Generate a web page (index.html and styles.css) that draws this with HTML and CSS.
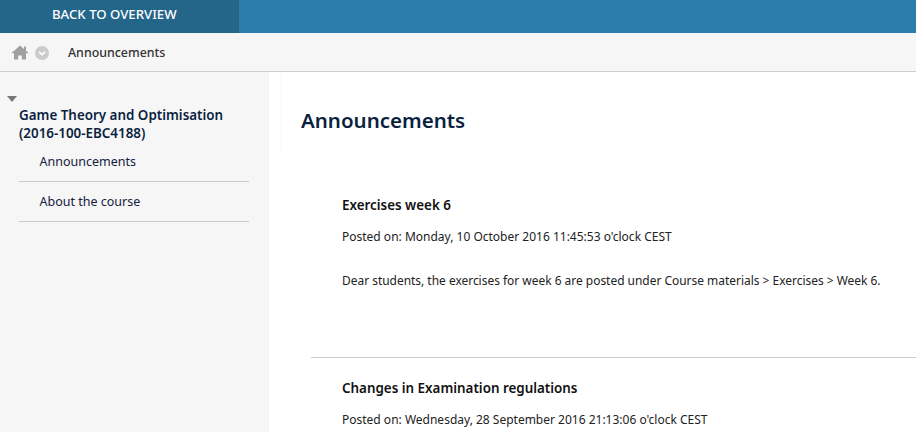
FILE: index.html
```html
<!DOCTYPE html>
<html lang="en">
<head>
  <meta charset="UTF-8">
  <meta name="viewport" content="width=device-width, initial-scale=1.0">
  <title>Announcements</title>
  <link rel="stylesheet" href="styles.css">
</head>
<body>
  <div class="topbar">
    <a class="back-link" href="#">BACK TO OVERVIEW</a>
  </div>

  <div class="breadcrumb">
    <svg class="home-icon" viewBox="0 0 18 15" width="18" height="15" aria-hidden="true">
      <path d="M9 0.5 L13 4 L13 1.5 L15 1.5 L15 5.8 L17.7 8.2 L15 8.2 L15 14.5 L10.8 14.5 L10.8 10.5 L7.2 10.5 L7.2 14.5 L3 14.5 L3 8.2 L0.3 8.2 Z" fill="#a0a0a0"/>
    </svg>
    <svg class="down-icon" viewBox="0 0 14 14" width="14" height="14" aria-hidden="true">
      <circle cx="7" cy="7" r="7" fill="#cbcbcb"/>
      <path d="M4 5.8 L7 8.6 L10 5.8" fill="none" stroke="#fff" stroke-width="1.8"/>
    </svg>
    <span class="crumb">Announcements</span>
  </div>

  <div class="main">
    <nav class="sidebar">
      <div class="caret"></div>
      <h2 class="course-title">Game Theory and Optimisation (2016-100-EBC4188)</h2>
      <ul class="course-menu">
        <li><a href="#">Announcements</a></li>
        <li><a href="#">About the course</a></li>
      </ul>
    </nav>

    <div class="content">
      <div class="page-header">
        <h1>Announcements</h1>
      </div>

      <ul class="announcements">
        <li class="announcement">
          <h3>Exercises week 6</h3>
          <p class="posted">Posted on: Monday, 10 October 2016 11:45:53 o'clock CEST</p>
          <p class="message">Dear students, the exercises for week 6 are posted under Course materials &gt; Exercises &gt; Week 6.</p>
        </li>
        <li class="announcement">
          <h3>Changes in Examination regulations</h3>
          <p class="posted">Posted on: Wednesday, 28 September 2016 21:13:06 o'clock CEST</p>
        </li>
      </ul>
    </div>
  </div>
</body>
</html>
```

FILE: styles.css
```css
html, body {
  height: 100%;
}

body {
  margin: 0;
  font-family: "Noto Sans", Arial, sans-serif;
  font-size: 12px;
  color: #1a1a2a;
  background-color: #fff;
  overflow: hidden;
}

/* Top bar */
.topbar {
  height: 33px;
  background-color: #2d7dac;
}

.back-link {
  display: block;
  width: 239px;
  height: 33px;
  padding-left: 52px;
  box-sizing: border-box;
  line-height: 28px;
  font-size: 13.2px;
  font-weight: 500;
  color: #fff;
  text-decoration: none;
  background-color: #24658a;
}

/* Breadcrumb */
.breadcrumb {
  display: flex;
  align-items: center;
  height: 38px;
  padding-left: 11px;
  background-color: #f6f6f6;
  border-bottom: 1px solid #ccc;
}

.home-icon {
  margin-right: 6px;
}

.down-icon {
  margin-top: 2px;
  margin-right: 19px;
}

.crumb {
  font-size: 12.4px;
  font-weight: 500;
  color: #333;
}

/* Layout */
.main {
  display: flex;
  height: 360px;
}

.sidebar {
  width: 269px;
  flex-shrink: 0;
  padding: 23px 20px 0 19px;
  box-sizing: border-box;
  background-color: #f6f6f6;
  position: relative;
}

.caret {
  position: absolute;
  top: 24px;
  left: 7px;
  border-left: 5.5px solid transparent;
  border-right: 5.5px solid transparent;
  border-top: 6px solid #777;
}

.course-title {
  margin: 11px 0 0;
  font-size: 13.4px;
  font-weight: 600;
  line-height: 18px;
  color: #0b1f3f;
}

.course-menu {
  list-style: none;
  margin: 0;
  padding: 0;
}

.course-menu li {
  height: 40px;
  box-sizing: border-box;
  border-bottom: 1px solid #ccc;
}

.course-menu a {
  display: block;
  padding-left: 20.5px;
  line-height: 39px;
  font-size: 12.5px;
  color: #14213d;
  text-decoration: none;
}

.content {
  flex: 1;
  padding-left: 12px;
}

.page-header {
  height: 80px;
  padding-left: 19px;
  box-sizing: border-box;
  border-left: 1px solid #f8f8f8;
}

.page-header h1 {
  margin: 0;
  padding-top: 33px;
  font-size: 20.5px;
  font-weight: 600;
  line-height: 30px;
  color: #0b1f3f;
}

.announcements {
  list-style: none;
  margin: 0 0 0 30px;
  padding: 0;
}

.announcement {
  padding: 43px 0 0 31px;
  height: 206px;
  box-sizing: border-box;
  border-bottom: 1px solid #ccc;
}

.announcement h3 {
  margin: 0;
  font-size: 13.4px;
  font-weight: 600;
  line-height: 20px;
  color: #111;
}

.announcement + .announcement {
  height: auto;
  padding-top: 20px;
  border-bottom: none;
}

.posted {
  margin: 13px 0 0;
  font-size: 12px;
  line-height: 18px;
  color: #222;
}

.message {
  margin: 26px 0 0;
  font-size: 11.95px;
  line-height: 18px;
  color: #222;
}
```
